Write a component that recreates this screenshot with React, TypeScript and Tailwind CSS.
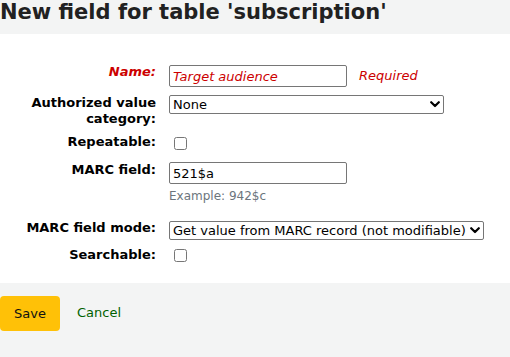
import React from "react";

const font = { fontFamily: '"DejaVu Sans", Verdana, sans-serif' };

function Chevron() {
  return (
    <svg width="10" height="7" viewBox="0 0 10 7" className="shrink-0">
      <path d="M1.2 1.2 L5 5 L8.8 1.2" fill="none" stroke="#000" strokeWidth="2.2" strokeLinecap="round" strokeLinejoin="round" />
    </svg>
  );
}

function FakeSelect({ text, width }: { text: string; width: string }) {
  return (
    <div className={`${width} h-[19px] border border-[#767676] rounded-[2px] bg-white flex items-center justify-between pl-[3px] pr-[3px] leading-[15px] whitespace-nowrap`}>
      <span>{text}</span>
      <Chevron />
    </div>
  );
}

export default function App() {
  return (
    <div className="w-[510px] h-[357px] bg-white text-[13px] text-black overflow-hidden" style={font}>
      <div className="h-[34px] bg-[#f3f4f4]">
        <h1 className="text-[21px] leading-[24px] font-bold text-[#212121] whitespace-nowrap">New field for table 'subscription'</h1>
      </div>
      <div className="pt-[30px] pb-[20px] bg-white">
        <div className="flex items-start">
          <div className="w-[156px] leading-[16px] text-right font-bold italic text-[#cc0000]">Name:</div>
          <div className="ml-[13px] flex items-center mt-[1px]">
            <input
              type="text"
              defaultValue="Target audience"
              className="h-[22px] w-[178px] border border-[#767676] rounded-[2px] px-[3px] italic text-[#cc0000] text-[13px]"
            />
            <span className="ml-[12px] italic text-[#cc0000]">Required</span>
          </div>
        </div>

        <div className="flex items-start mt-[8px]">
          <div className="w-[156px] leading-[16px] text-right font-bold">
            Authorized value
            <br />
            category:
          </div>
          <div className="ml-[13px]">
            <FakeSelect text="None" width="w-[275px]" />
          </div>
        </div>

        <div className="flex items-start mt-[7px]">
          <div className="w-[156px] leading-[16px] text-right font-bold">Repeatable:</div>
          <div className="ml-[13px]">
            <input type="checkbox" className="m-0 ml-[5px] mt-[3px] w-[13px] h-[13px] block" />
          </div>
        </div>

        <div className="flex items-start mt-[12px]">
          <div className="w-[156px] leading-[16px] text-right font-bold">MARC field:</div>
          <div className="ml-[13px]">
            <input
              type="text"
              defaultValue="521$a"
              className="h-[22px] w-[178px] border border-[#767676] rounded-[2px] px-[3px] text-[13px] block"
            />
            <div className="mt-[4px] text-[12px] leading-[16px] text-[#6c757d]">Example: 942$c</div>
          </div>
        </div>

        <div className="flex items-start mt-[16px]">
          <div className="w-[156px] leading-[16px] text-right font-bold">MARC field mode:</div>
          <div className="ml-[13px] mt-[1px]">
            <FakeSelect text="Get value from MARC record (not modifiable)" width="w-[315px]" />
          </div>
        </div>

        <div className="flex items-start mt-[7px]">
          <div className="w-[156px] leading-[16px] text-right font-bold">Searchable:</div>
          <div className="ml-[13px]">
            <input type="checkbox" className="m-0 ml-[5px] mt-[2px] w-[13px] h-[13px] block" />
          </div>
        </div>
      </div>

      <div className="h-[74px] bg-[#f3f4f4] pt-[13px] flex items-start">
        <button className="h-[35px] w-[60px] bg-[#ffc107] rounded-[4px] text-[13px] text-[#111]">Save</button>
        <a href="#" className="ml-[17px] mt-[9px] text-[#006100] leading-[16px]">Cancel</a>
      </div>
    </div>
  );
}
